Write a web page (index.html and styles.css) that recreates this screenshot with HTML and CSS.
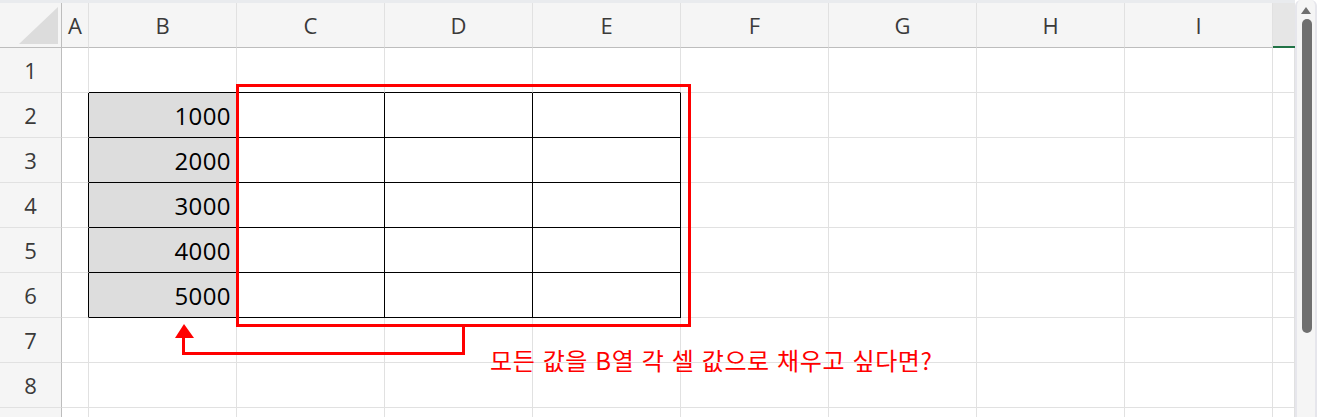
FILE: index.html
```html
<!DOCTYPE html>
<html lang="ko">

<head>
    <meta charset="UTF-8">
    <meta name="viewport" content="width=device-width, initial-scale=1.0">
    <title>B열 값 채우기</title>
    <link rel="stylesheet" href="styles.css">
</head>

<body>
    <div class="app">
        <div class="main">
            <div class="strip"></div>
            <div class="grid">
                <!-- column headers -->
                <div class="corner"><span class="tri"></span></div>
                <div class="col">A</div><div class="col">B</div><div class="col">C</div><div class="col">D</div><div class="col">E</div><div class="col">F</div><div class="col">G</div><div class="col">H</div><div class="col">I</div><div class="col sel"></div>

                <div class="num">1</div>
                <div class="cell"></div><div class="cell bb"></div><div class="cell bb"></div><div class="cell bb"></div><div class="cell bb"></div><div class="cell"></div><div class="cell"></div><div class="cell"></div><div class="cell"></div><div class="cell"></div>

                <div class="num">2</div>
                <div class="cell br"></div><div class="cell bx val">1000</div><div class="cell bx"></div><div class="cell bx"></div><div class="cell bx"></div><div class="cell"></div><div class="cell"></div><div class="cell"></div><div class="cell"></div><div class="cell"></div>

                <div class="num">3</div>
                <div class="cell br"></div><div class="cell bx val">2000</div><div class="cell bx"></div><div class="cell bx"></div><div class="cell bx"></div><div class="cell"></div><div class="cell"></div><div class="cell"></div><div class="cell"></div><div class="cell"></div>

                <div class="num">4</div>
                <div class="cell br"></div><div class="cell bx val">3000</div><div class="cell bx"></div><div class="cell bx"></div><div class="cell bx"></div><div class="cell"></div><div class="cell"></div><div class="cell"></div><div class="cell"></div><div class="cell"></div>

                <div class="num">5</div>
                <div class="cell br"></div><div class="cell bx val">4000</div><div class="cell bx"></div><div class="cell bx"></div><div class="cell bx"></div><div class="cell"></div><div class="cell"></div><div class="cell"></div><div class="cell"></div><div class="cell"></div>

                <div class="num">6</div>
                <div class="cell br"></div><div class="cell bx val">5000</div><div class="cell bx"></div><div class="cell bx"></div><div class="cell bx"></div><div class="cell"></div><div class="cell"></div><div class="cell"></div><div class="cell"></div><div class="cell"></div>

                <div class="num">7</div>
                <div class="cell"></div><div class="cell"></div><div class="cell"></div><div class="cell"></div><div class="cell"></div><div class="cell"></div><div class="cell"></div><div class="cell"></div><div class="cell"></div><div class="cell"></div>

                <div class="num">8</div>
                <div class="cell"></div><div class="cell"></div><div class="cell"></div><div class="cell"></div><div class="cell"></div><div class="cell"></div><div class="cell"></div><div class="cell"></div><div class="cell"></div><div class="cell"></div>

                <!-- row 9 is only a sliver at the bottom edge -->
                <div class="num"></div>
                <div class="cell"></div><div class="cell"></div><div class="cell"></div><div class="cell"></div><div class="cell"></div><div class="cell"></div><div class="cell"></div><div class="cell"></div><div class="cell"></div><div class="cell"></div>
            </div>
        </div>

        <div class="vscroll">
            <span class="up"></span>
            <div class="thumb"></div>
        </div>

        <!-- annotation drawn over the sheet -->
        <svg class="marks" width="1317" height="417" viewBox="0 0 1317 417">
            <rect x="237.5" y="85.5" width="452" height="240" fill="none" stroke="#ff0000" stroke-width="3" />
            <polyline points="463.5,327 463.5,353.5 183.5,353.5 183.5,336" fill="none" stroke="#ff0000" stroke-width="3" stroke-linecap="square" />
            <polygon points="184,324 175,338 194,338" fill="#ff0000" />
        </svg>
        <div class="note">모든 값을 B열 각 셀 값으로 채우고 싶다면?</div>
    </div>
</body>

</html>
```

FILE: styles.css
```css
body {
    margin: 0;
    padding: 0;
    background-color: #ffffff;
    font-family: "Open Sans", "Noto Sans", sans-serif;
    overflow: hidden;
}

.app {
    position: relative;
    display: flex;
    width: 1317px;
    height: 417px;
    overflow: hidden;
}

.main {
    flex: 1;
    display: flex;
    flex-direction: column;
    min-width: 0;
}

.strip {
    flex-shrink: 0;
    height: 3px;
    background-color: #e9ebee;
}

.grid {
    flex-shrink: 0;
    display: grid;
    grid-template-columns: 62px 27px repeat(8, 148px) 1fr;
    grid-template-rows: 45px;
    grid-auto-rows: 45px;
}

.grid > div {
    box-sizing: border-box;
}

.corner {
    position: relative;
    background-color: #f5f5f5;
    border-right: 1px solid #bdbdbd;
    border-bottom: 1px solid #bdbdbd;
}

.corner .tri {
    position: absolute;
    left: 19px;
    top: 4px;
    width: 0;
    height: 0;
    border-left: 39px solid transparent;
    border-bottom: 37px solid #dcdcdc;
}

.col {
    background-color: #f5f5f5;
    border-right: 1px solid #e1e1e1;
    border-bottom: 1px solid #bdbdbd;
    color: #3a3a3a;
    font-size: 22px;
    display: flex;
    align-items: center;
    justify-content: center;
}

.col.sel {
    background-color: #e6e6e6;
    border-right: none;
    border-bottom: 2px solid #217346;
}

.num {
    background-color: #f5f5f5;
    border-right: 1px solid #bdbdbd;
    border-bottom: 1px solid #e1e1e1;
    color: #3a3a3a;
    font-size: 22px;
    display: flex;
    align-items: center;
    justify-content: center;
}

.cell {
    border-right: 1px solid #e1e1e1;
    border-bottom: 1px solid #e1e1e1;
}

.cell.br {
    border-right-color: #000000;
}

.cell.bb {
    border-bottom-color: #000000;
}

.cell.bx {
    border-right-color: #000000;
    border-bottom-color: #000000;
}

.cell.val {
    background-color: #dddddd;
    color: #000000;
    font-size: 24px;
    letter-spacing: 0.4px;
    display: flex;
    align-items: center;
    justify-content: flex-end;
    padding-right: 5px;
}

.vscroll {
    position: relative;
    flex-shrink: 0;
    width: 22px;
    box-sizing: border-box;
    background-color: #f5f5f5;
    border-left: 2px solid #e6e6ec;
    border-right: 2px solid #e6e6ec;
    border-radius: 6px 6px 0 0;
}

.vscroll .up {
    position: absolute;
    left: 4px;
    top: 7px;
    width: 0;
    height: 0;
    border-left: 5px solid transparent;
    border-right: 5px solid transparent;
    border-bottom: 7px solid #6f6f6f;
}

.vscroll .thumb {
    position: absolute;
    left: 5px;
    top: 19px;
    width: 10px;
    height: 314px;
    background-color: #6f6f6f;
    border-radius: 5px;
}

.marks {
    position: absolute;
    left: 0;
    top: 0;
    pointer-events: none;
}

.note {
    position: absolute;
    left: 490px;
    top: 345px;
    color: #ff0000;
    font-family: "Noto Sans CJK KR", "Noto Sans", sans-serif;
    font-size: 24px;
    letter-spacing: 0.6px;
    line-height: 30px;
    white-space: nowrap;
}
```
